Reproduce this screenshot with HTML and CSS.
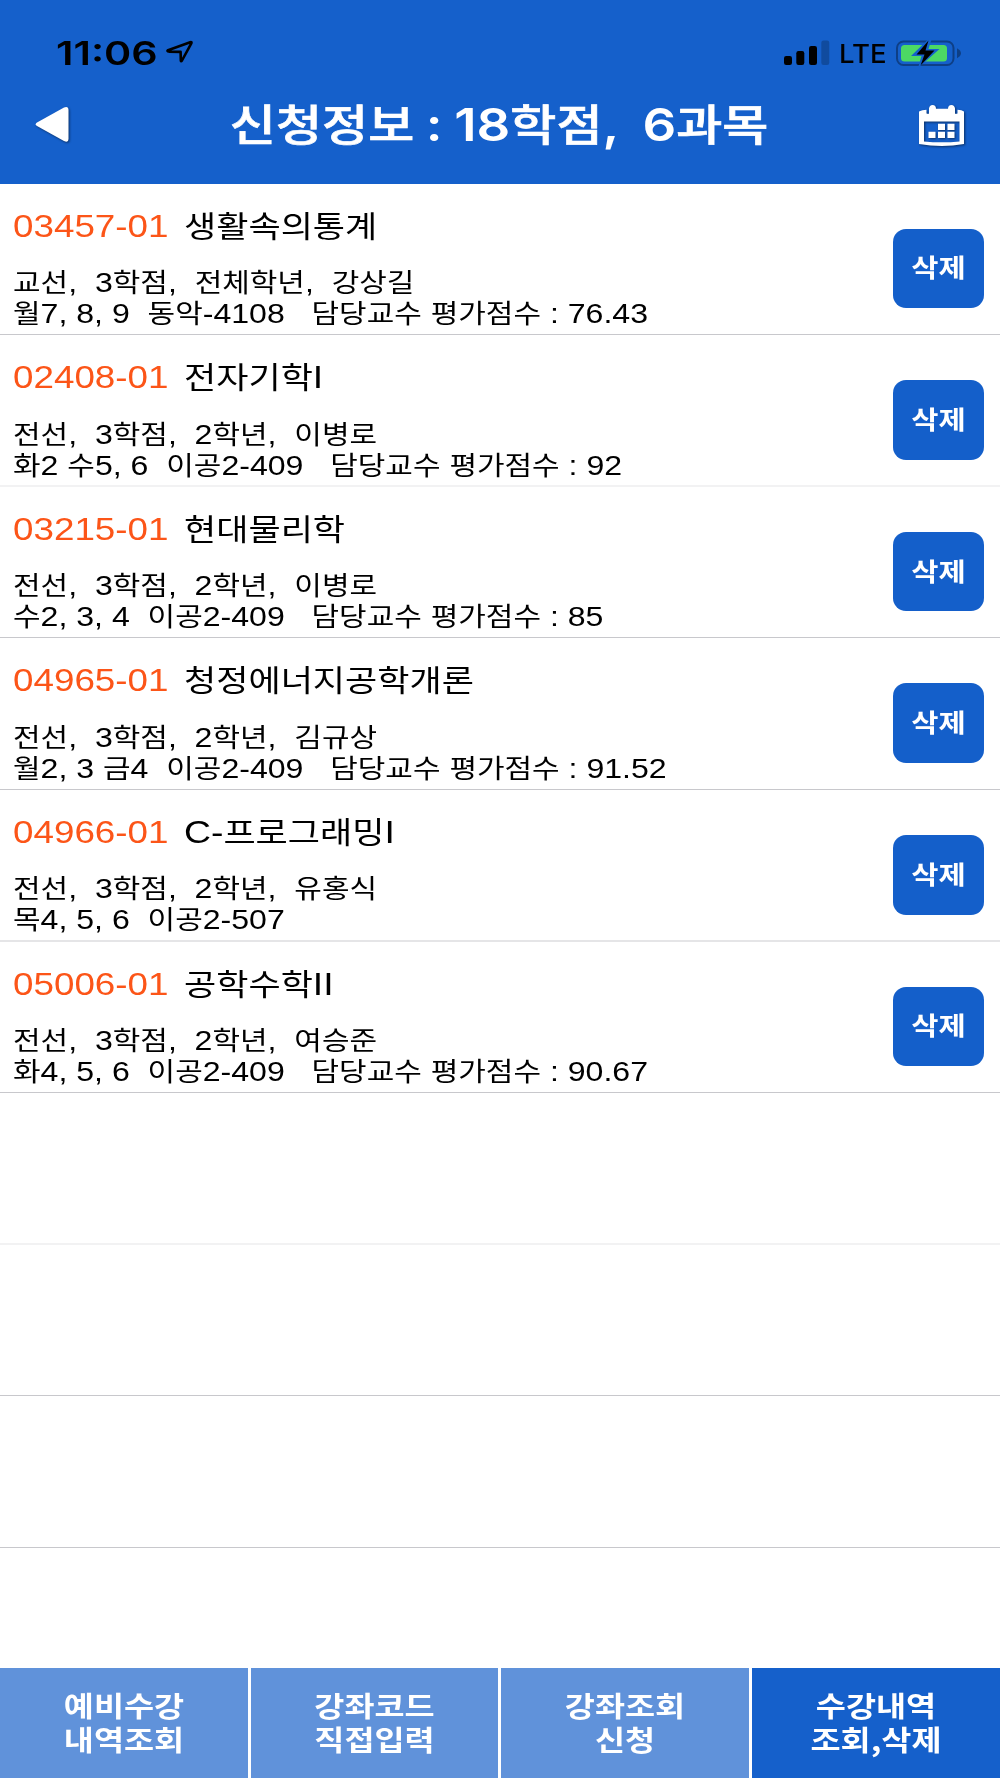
FILE: index.html
```html
<!DOCTYPE html>
<html lang="ko">
<head>
<meta charset="utf-8">
<title>신청정보</title>
<link rel="stylesheet" href="styles.css">
</head>
<body>
<div class="app">
  <header class="header">
    <div class="status">
      <span class="time">11:06</span>
      <svg class="location" width="28" height="24" viewBox="0 0 28 24"><path d="M2 10.2 24.2 2.3Q26 1.7 25.3 3.4L16 20.5Q14.9 22 14.8 20.3L14.6 11.9 3 11.6Q.6 11 2 10.2Z" fill="none" stroke="#000" stroke-width="2.6" stroke-linejoin="round"/></svg>
      <svg class="signal" width="46" height="26" viewBox="0 0 46 26"><rect x="0" y="16" width="8" height="9" rx="2.2"/><rect x="12.3" y="11" width="8" height="14" rx="2.2"/><rect x="25" y="6" width="8" height="19" rx="2.2"/><rect x="37.3" y="0.5" width="8" height="24.5" rx="2.2" opacity=".22"/></svg>
      <span class="network">LTE</span>
      <svg class="battery" width="66" height="28" viewBox="0 0 66 28"><rect x="1" y="2.5" width="56.5" height="23.5" rx="6.5" fill="none" stroke="#0e3f86" stroke-width="2"/><path d="M61 9.3Q65 11.5 65 14.3T61 19.3Z" fill="#0e3f86"/><rect x="5" y="6" width="46" height="16.5" rx="3.5" fill="#4cd964"/><path d="M33.5-1 15 17H25.5L22 29 43.5 10H32.5L36-1Z" fill="#1560cb"/><path d="M32.5 1.5 20.5 15.5H28.5L24.5 26.5 38.5 11.5H29.5Z"/></svg>
    </div>
    <div class="navbar">
      <svg class="back" width="38" height="40" viewBox="0 0 38 40"><path d="M3 17.5 30 2.5Q34.5 1 34.5 5V34Q34.5 38 30 36L3 21Q.5 19.2 3 17.5Z" fill="#fff"/></svg>
      <h1 class="heading"><span class="ko">신청정보</span> : 18<span class="ko">학점</span>,&nbsp; 6<span class="ko">과목</span></h1>
      <svg class="calendar" width="48" height="42" viewBox="0 0 48 42"><path fill="#fff" fill-rule="evenodd" d="M1 6.5Q4 5 8.500 4.800V8.500Q11 9.500 11 8V3.500Q11.500 0 14.500 0 18 0 18 3.800H30Q30 0 33.500 0 36.500 0 37 3.500V8Q37 9.500 39.500 8.500V4.800Q44 5 46 6.500V39Q24 43 1 39ZM6 16.5V36.5Q24 38.2 41.5 36.5V16.5Z"/><path d="M20 18.7h7V25h-7ZM29.5 18.7h7V25h-7ZM10.500 26.7h7V33h-7ZM20 26.7h7V33h-7ZM29.5 26.7h7V33h-7Z" fill="#fff"/></svg>
    </div>
  </header>
  <main class="list">
    <section class="row">
      <div class="info">
        <div class="title"><span class="code">03457-01</span><span class="name"><span class="ko">생활속의통계</span></span></div>
        <p class="line"><span class="ko">교선</span>,  3<span class="ko">학점</span>,  <span class="ko">전체학년</span>,  <span class="ko">강상길</span></p>
        <p class="line"><span class="ko">월</span>7, 8, 9  <span class="ko">동악</span>-4108   <span class="ko">담당교수</span> <span class="ko">평가점수</span> : 76.43</p>
      </div>
      <button class="delete"><span>삭제</span></button>
    </section>
    <section class="row soft">
      <div class="info">
        <div class="title"><span class="code">02408-01</span><span class="name"><span class="ko">전자기학</span>I</span></div>
        <p class="line"><span class="ko">전선</span>,  3<span class="ko">학점</span>,  2<span class="ko">학년</span>,  <span class="ko">이병로</span></p>
        <p class="line"><span class="ko">화</span>2 <span class="ko">수</span>5, 6  <span class="ko">이공</span>2-409   <span class="ko">담당교수</span> <span class="ko">평가점수</span> : 92</p>
      </div>
      <button class="delete"><span>삭제</span></button>
    </section>
    <section class="row">
      <div class="info">
        <div class="title"><span class="code">03215-01</span><span class="name"><span class="ko">현대물리학</span></span></div>
        <p class="line"><span class="ko">전선</span>,  3<span class="ko">학점</span>,  2<span class="ko">학년</span>,  <span class="ko">이병로</span></p>
        <p class="line"><span class="ko">수</span>2, 3, 4  <span class="ko">이공</span>2-409   <span class="ko">담당교수</span> <span class="ko">평가점수</span> : 85</p>
      </div>
      <button class="delete"><span>삭제</span></button>
    </section>
    <section class="row">
      <div class="info">
        <div class="title"><span class="code">04965-01</span><span class="name"><span class="ko">청정에너지공학개론</span></span></div>
        <p class="line"><span class="ko">전선</span>,  3<span class="ko">학점</span>,  2<span class="ko">학년</span>,  <span class="ko">김규상</span></p>
        <p class="line"><span class="ko">월</span>2, 3 <span class="ko">금</span>4  <span class="ko">이공</span>2-409   <span class="ko">담당교수</span> <span class="ko">평가점수</span> : 91.52</p>
      </div>
      <button class="delete"><span>삭제</span></button>
    </section>
    <section class="row medium">
      <div class="info">
        <div class="title"><span class="code">04966-01</span><span class="name">C-<span class="ko">프로그래밍</span>I</span></div>
        <p class="line"><span class="ko">전선</span>,  3<span class="ko">학점</span>,  2<span class="ko">학년</span>,  <span class="ko">유홍식</span></p>
        <p class="line"><span class="ko">목</span>4, 5, 6  <span class="ko">이공</span>2-507</p>
      </div>
      <button class="delete"><span>삭제</span></button>
    </section>
    <section class="row">
      <div class="info">
        <div class="title"><span class="code">05006-01</span><span class="name"><span class="ko">공학수학</span>II</span></div>
        <p class="line"><span class="ko">전선</span>,  3<span class="ko">학점</span>,  2<span class="ko">학년</span>,  <span class="ko">여승준</span></p>
        <p class="line"><span class="ko">화</span>4, 5, 6  <span class="ko">이공</span>2-409   <span class="ko">담당교수</span> <span class="ko">평가점수</span> : 90.67</p>
      </div>
      <button class="delete"><span>삭제</span></button>
    </section>
    <section class="row soft"></section>
    <section class="row"></section>
    <section class="row"></section>
  </main>
  <nav class="tabs">
    <a class="tab"><span>예비수강<br>내역조회</span></a>
    <a class="tab"><span>강좌코드<br>직접입력</span></a>
    <a class="tab"><span>강좌조회<br>신청</span></a>
    <a class="tab active"><span>수강내역<br>조회,삭제</span></a>
  </nav>
</div>
</body>
</html>
```
FILE: styles.css
```css
* { box-sizing: border-box; margin: 0; }

body {
  background: #fff;
  color: #000;
  font-family: "Liberation Sans", "Noto Sans CJK KR", sans-serif;
}

.app {
  display: flex;
  flex-direction: column;
  width: 1000px;
  height: 1778px;
  overflow: hidden;
}

.ko {
  font-family: "Noto Sans CJK KR", sans-serif;
  line-height: 0;
}

/* header */
.header {
  flex: none;
  height: 183.7px;
  background: #1560cb;
}

.status {
  display: flex;
  align-items: center;
  height: 106px;
  padding: 0 38px 0 56px;
  font-family: Inter, sans-serif;
}

.time {
  width: 110px;
  font-size: 33px;
  font-weight: 600;
  transform: scaleX(1.25);
  transform-origin: left;
}

.location { margin-top: -2px; }
.signal { margin-left: auto; }

.network {
  width: 48px;
  margin: 0 9px 0 9px;
  font-size: 26px;
  font-weight: 500;
  transform: scaleX(1.06);
  transform-origin: left;
}

.navbar {
  display: flex;
  align-items: center;
  justify-content: space-between;
  height: 38px;
  padding: 0 34px 0 34px;
}

.calendar { margin-top: 1px; }
.back, .calendar { filter: drop-shadow(1px 1px 1px rgba(0, 0, 0, .5)); }

.heading {
  margin-left: 9px;
  color: #fff;
  font: 600 45.5px/60px Inter, sans-serif;
  white-space: nowrap;
  word-spacing: -1.5px;
  transform: scaleX(1.16);
}

.heading .ko {
  font-size: 43.2px;
  font-weight: 500;
  line-height: 0;
  -webkit-text-stroke: .7px #fff;
}

/* course list */
.list { flex: 1; min-height: 0; overflow: hidden; }

.row {
  display: flex;
  justify-content: space-between;
  height: 151.6px;
  padding: 22px 16.5px 0 13px;
  border-bottom: 1px solid #c8c8cc;
}

.row.soft { border-bottom: 2px solid #f2f2f3; }
.row.medium { border-bottom: 2px solid #e5e5e7; }

.title {
  display: flex;
  height: 40px;
  margin-bottom: 21.4px;
  font-size: 32px;
  line-height: 40px;
  white-space: nowrap;
}

.code {
  width: 171.3px;
  color: #fc5518;
  transform: scaleX(1.15);
  transform-origin: left;
}

.name { transform: scaleX(1.167); transform-origin: left; }
.name .ko { font-size: 30px; }

.line {
  font-size: 27.4px;
  line-height: 31px;
  white-space: pre;
  transform: scaleX(1.171);
  transform-origin: left;
}

.line .ko { font-size: 25.6px; }

.delete {
  width: 91px;
  height: 79.5px;
  margin-top: 23px;
  padding: 0 0 4px;
  border: 0;
  border-radius: 13px;
  background: #145fca;
  color: #fff;
  font: 700 25.4px/36px "Noto Sans CJK KR", sans-serif;
}

.delete span { display: block; transform: scaleX(1.165); }

/* bottom tabs */
.tabs {
  display: grid;
  flex: none;
  grid-template-columns: 248px 247px 248px 248px;
  gap: 3px;
  height: 110.5px;
}

.tab {
  padding-top: 20.5px;
  background: #6092da;
  color: #fff;
  font: 700 28.3px/33.5px "Noto Sans CJK KR", sans-serif;
  text-align: center;
}

.tab span { display: block; transform: scaleX(1.155); }
.tab.active { background: #1560cb; }
```
